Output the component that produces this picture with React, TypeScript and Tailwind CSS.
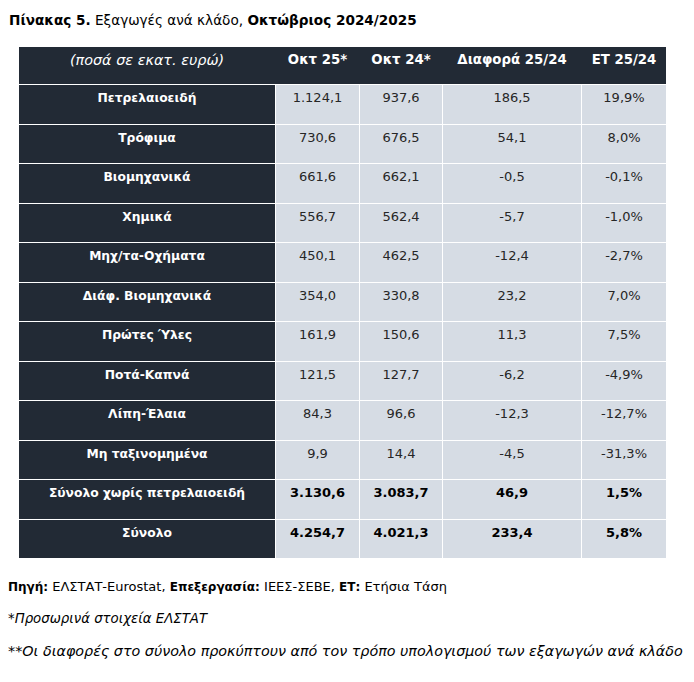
import React from "react";

const rows: [string, string, string, string, string, boolean][] = [
  ["Πετρελαιοειδή", "1.124,1", "937,6", "186,5", "19,9%", false],
  ["Τρόφιμα", "730,6", "676,5", "54,1", "8,0%", false],
  ["Βιομηχανικά", "661,6", "662,1", "-0,5", "-0,1%", false],
  ["Χημικά", "556,7", "562,4", "-5,7", "-1,0%", false],
  ["Μηχ/τα-Οχήματα", "450,1", "462,5", "-12,4", "-2,7%", false],
  ["Διάφ. Βιομηχανικά", "354,0", "330,8", "23,2", "7,0%", false],
  ["Πρώτες Ύλες", "161,9", "150,6", "11,3", "7,5%", false],
  ["Ποτά-Καπνά", "121,5", "127,7", "-6,2", "-4,9%", false],
  ["Λίπη-Έλαια", "84,3", "96,6", "-12,3", "-12,7%", false],
  ["Μη ταξινομημένα", "9,9", "14,4", "-4,5", "-31,3%", false],
  ["Σύνολο χωρίς πετρελαιοειδή", "3.130,6", "3.083,7", "46,9", "1,5%", true],
  ["Σύνολο", "4.254,7", "4.021,3", "233,4", "5,8%", true],
];

export default function App() {
  return (
    <div
      className="w-[694px] h-[682px] bg-white text-[#1a1a1a] relative"
      style={{ fontFamily: '"DejaVu Sans", sans-serif' }}
    >
      <div className="pt-[11px] pl-[9px] text-[13.6px] leading-[18px] text-black">
        <span className="font-bold">Πίνακας 5.</span> Εξαγωγές ανά κλάδο,{" "}
        <span className="font-bold">Οκτώβριος 2024/2025</span>
      </div>

      <div className="ml-[19px] mt-[18px] w-[647px] bg-white flex flex-col gap-px">
        <div className="grid grid-cols-[256px_83px_82px_138px_84px] gap-x-px bg-[#222a35] h-[37px] text-white text-[13.3px] leading-[18px]">
          <div className="pt-[4px] text-center italic text-[14.4px]">(ποσά σε εκατ. ευρώ)</div>
          <div className="pt-[4px] text-center font-bold">Οκτ 25*</div>
          <div className="pt-[4px] text-center font-bold">Οκτ 24*</div>
          <div className="pt-[4px] text-center font-bold">Διαφορά 25/24</div>
          <div className="pt-[4px] text-center font-bold">ΕΤ 25/24</div>
        </div>
        {rows.map((r) => (
          <div
            key={r[0]}
            className="grid grid-cols-[256px_83px_82px_138px_84px] gap-x-px h-[38.5px] text-[13px] leading-[18px]"
          >
            <div className="bg-[#222a35] text-white font-bold text-center pt-[4px] text-[12.3px]">{r[0]}</div>
            {[r[1], r[2], r[3], r[4]].map((v, i) => (
              <div
                key={i}
                className={`bg-[#d6dce4] text-center pt-[4px] ${r[5] ? "font-bold text-black" : "text-[#262626]"}`}
              >
                {v}
              </div>
            ))}
          </div>
        ))}
      </div>

      <div className="pl-[8px] leading-[18px] text-black">
        <div className="mt-[20px] text-[13px]">
          <span className="font-bold text-[12px]">Πηγή:</span> ΕΛΣΤΑΤ-Eurostat,{" "}
          <span className="font-bold text-[12px]">Επεξεργασία:</span> ΙΕΕΣ-ΣΕΒΕ,{" "}
          <span className="font-bold text-[12px]">ΕΤ:</span> Ετήσια Τάση
        </div>
        <div className="mt-[14px] italic text-[13.3px]">*Προσωρινά στοιχεία ΕΛΣΤΑΤ</div>
        <div className="mt-[14px] italic text-[14.3px]">
          **Οι διαφορές στο σύνολο προκύπτουν από τον τρόπο υπολογισμού των εξαγωγών ανά κλάδο
        </div>
      </div>
    </div>
  );
}
